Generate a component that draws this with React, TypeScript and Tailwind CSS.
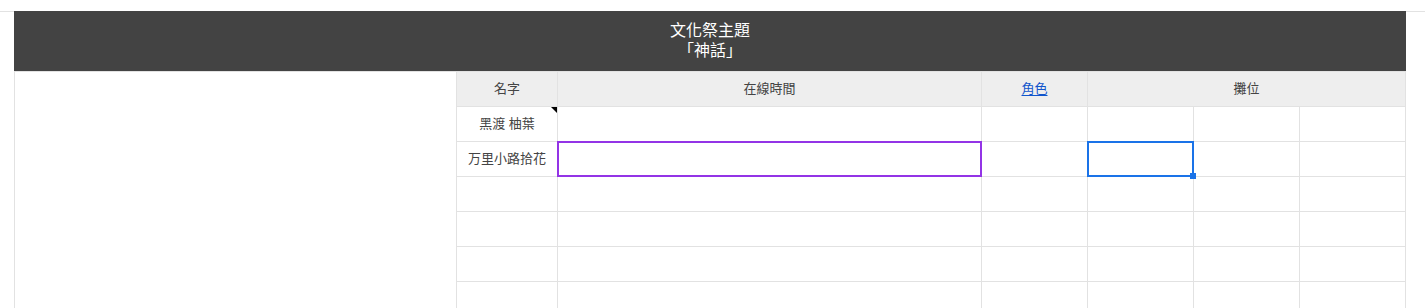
import React from "react";

const font = '"Liberation Sans", Arial, "Noto Sans CJK TC", sans-serif';

const rows: { name: string; note?: boolean }[] = [
  { name: "黑渡 柚葉", note: true },
  { name: "万里小路拾花" },
  { name: "" },
  { name: "" },
  { name: "" },
  { name: "" },
];

function Cell({
  children,
  head = false,
  className = "",
}: {
  children?: React.ReactNode;
  head?: boolean;
  className?: string;
}) {
  return (
    <div
      className={`relative h-[34px] flex items-center justify-center text-[13px] text-[#444] ${
        head ? "bg-[#eeeeee]" : "bg-white"
      } ${className}`}
    >
      {children}
    </div>
  );
}

export default function App() {
  return (
    <div className="w-[1425px] h-[308px] overflow-hidden bg-white" style={{ fontFamily: font }}>
      <div className="h-[11px]" />
      {/* banner row */}
      <div className="flex h-[60px]">
        <div className="w-[14px] border-t border-[#e2e2e2]" />
        <div className="w-[1392px] bg-[#434343] flex flex-col items-center justify-center text-white text-[16px] leading-[20px]">
          <span>文化祭主題</span>
          <span>「神話」</span>
        </div>
        <div className="flex-1 border-t border-[#e2e2e2]" />
      </div>

      {/* sheet grid */}
      <div className="ml-[14px] w-[1392px] grid grid-cols-[441px_100px_423px_105px_105px_105px_105px] gap-px bg-[#e2e2e2] px-px pt-px">
        <div className="row-span-7 bg-white" />

        <Cell head>名字</Cell>
        <Cell head>在線時間</Cell>
        <Cell head>
          <span className="text-[#1155cc] underline underline-offset-2">角色</span>
        </Cell>
        <Cell head className="col-span-3">
          攤位
        </Cell>

        {rows.map((r, i) => (
          <React.Fragment key={i}>
            <Cell>
              {r.name}
              {r.note && (
                <span className="absolute right-0 top-0 w-0 h-0 border-l-[6px] border-l-transparent border-t-[6px] border-t-black" />
              )}
            </Cell>
            <Cell>
              {i === 1 && (
                <span className="absolute -inset-px z-10 border-2 border-[#9334e6]" />
              )}
            </Cell>
            <Cell />
            <Cell>
              {i === 1 && (
                <>
                  <span className="absolute -inset-px z-10 border-2 border-[#1a73e8]" />
                  <span className="absolute -right-[3px] -bottom-[3px] z-20 w-[6px] h-[6px] bg-[#1a73e8]" />
                </>
              )}
            </Cell>
            <Cell />
            <Cell />
          </React.Fragment>
        ))}
      </div>
    </div>
  );
}
